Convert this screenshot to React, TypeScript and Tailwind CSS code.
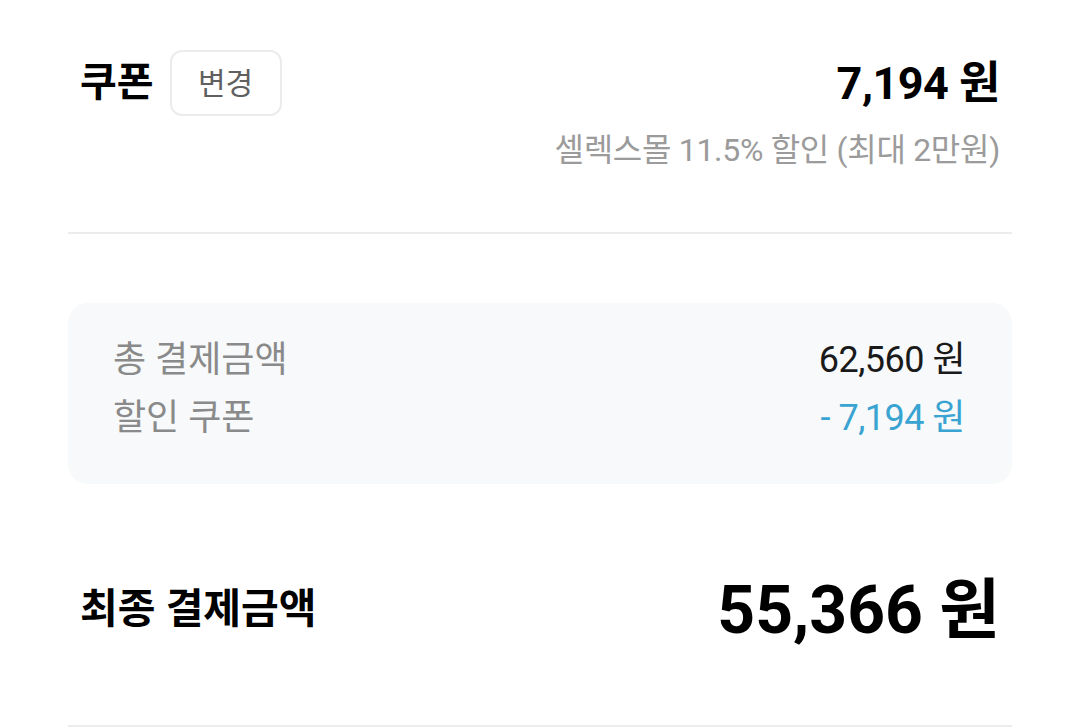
import React from "react";

const font = "font-['Roboto','Noto_Sans_CJK_KR',sans-serif]";

const App: React.FC = () => {
  return (
    <div className={`${font} bg-white w-[1080px] h-[727px] overflow-hidden`}>
      <div className="mx-[68px] flex flex-col">
        {/* Coupon */}
        <div className="mt-[50px] flex items-center justify-between px-3">
          <div className="flex items-center gap-4">
            <span className="text-[40px] font-bold text-black leading-none">쿠폰</span>
            <button className="w-[112px] h-[66px] rounded-xl border-2 border-[#ececec] text-[30px] text-[#606060] bg-white">
              변경
            </button>
          </div>
          <span className="text-[45px] font-bold text-black leading-none tracking-[-0.5px]">
            7,194 원
          </span>
        </div>
        <p className="mt-[14px] px-3 text-right text-[32px] leading-[40px] text-[#9b9b9b] tracking-[-0.3px]">
          셀렉스몰 11.5% 할인 (최대 2만원)
        </p>

        <div className="mt-[62px] h-[2px] bg-[#ececec]" />

        {/* Summary card */}
        <div className="mt-[69px] rounded-[20px] bg-[#f7f9fa] pl-[45px] pr-[47px] pt-[35px] pb-[44px] flex flex-col gap-[14px]">
          <div className="flex items-center justify-between h-[44px]">
            <span className="text-[36px] text-[#8a8a8a]">총 결제금액</span>
            <span className="text-[36px] text-[#1a1a1a] tracking-[-0.5px]">62,560 원</span>
          </div>
          <div className="flex items-center justify-between h-[44px]">
            <span className="text-[36px] text-[#8a8a8a]">할인 쿠폰</span>
            <span className="text-[36px] text-[#39a3d1] tracking-[-0.5px]">- 7,194 원</span>
          </div>
        </div>

        {/* Final */}
        <div className="mt-[91px] h-[70px] flex items-center justify-between px-3">
          <span className="text-[41px] font-bold text-black">최종 결제금액</span>
          <span className="text-[66px] font-bold text-black">55,366 원</span>
        </div>

        <div className="mt-[80px] h-[2px] bg-[#ececec]" />
      </div>
    </div>
  );
};

export default App;
